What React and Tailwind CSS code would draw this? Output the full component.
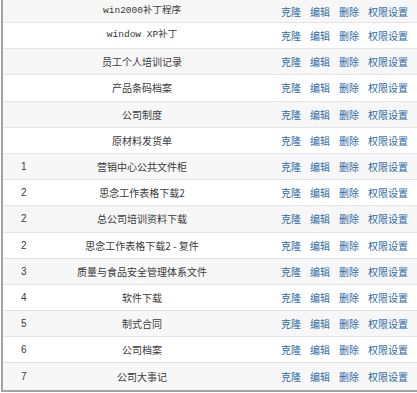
const rows = [
    { no: "", name: "win2000补丁程序", mono: true },
    { no: "", name: "window XP补丁", mono: true },
    { no: "", name: "员工个人培训记录" },
    { no: "", name: "产品条码档案" },
    { no: "", name: "公司制度" },
    { no: "", name: "原材料发货单" },
    { no: "1", name: "营销中心公共文件柜" },
    { no: "2", name: "思念工作表格下载2" },
    { no: "2", name: "总公司培训资料下载" },
    { no: "2", name: "思念工作表格下载2 - 复件" },
    { no: "3", name: "质量与食品安全管理体系文件" },
    { no: "4", name: "软件下载" },
    { no: "5", name: "制式合同" },
    { no: "6", name: "公司档案" },
    { no: "7", name: "公司大事记" },
];

const actions = ["克隆", "编辑", "删除", "权限设置"];

const App = () => {
    return (
        <div className="w-[417px] h-[393px] bg-white overflow-hidden font-['Noto_Sans_CJK_SC',sans-serif] text-[10px] text-[#3a3a3a]">
            <div className="ml-[1px] border-l-2 border-b-2 border-[#a3a3a3]">
                {rows.map((row, i) => (
                    <div
                        key={i}
                        className={`grid grid-cols-[60px_158px_1fr] items-center border-b border-[#e4e4e4] ${
                            i === 0 ? "h-[23px]" : "h-[26.2px]"
                        } ${i % 2 === 0 ? "bg-[#f7f7f7]" : "bg-white"} ${i === rows.length - 1 ? "border-b-0" : ""}`}
                    >
                        <div className="pl-[18px] font-['Liberation_Sans',sans-serif] text-[10px]">{row.no}</div>
                        <div
                            className={`text-center whitespace-nowrap ${
                                row.mono ? "font-['Liberation_Mono','Noto_Sans_CJK_SC',monospace] text-[9.5px]" : ""
                            }`}
                        >
                            {row.name}
                        </div>
                        <div className="flex justify-end gap-[9px] pr-[9px] text-[#2e6aa6]">
                            {actions.map((a) => (
                                <a key={a} href="#" className="whitespace-nowrap">
                                    {a}
                                </a>
                            ))}
                        </div>
                    </div>
                ))}
            </div>
        </div>
    );
};

export default App;
